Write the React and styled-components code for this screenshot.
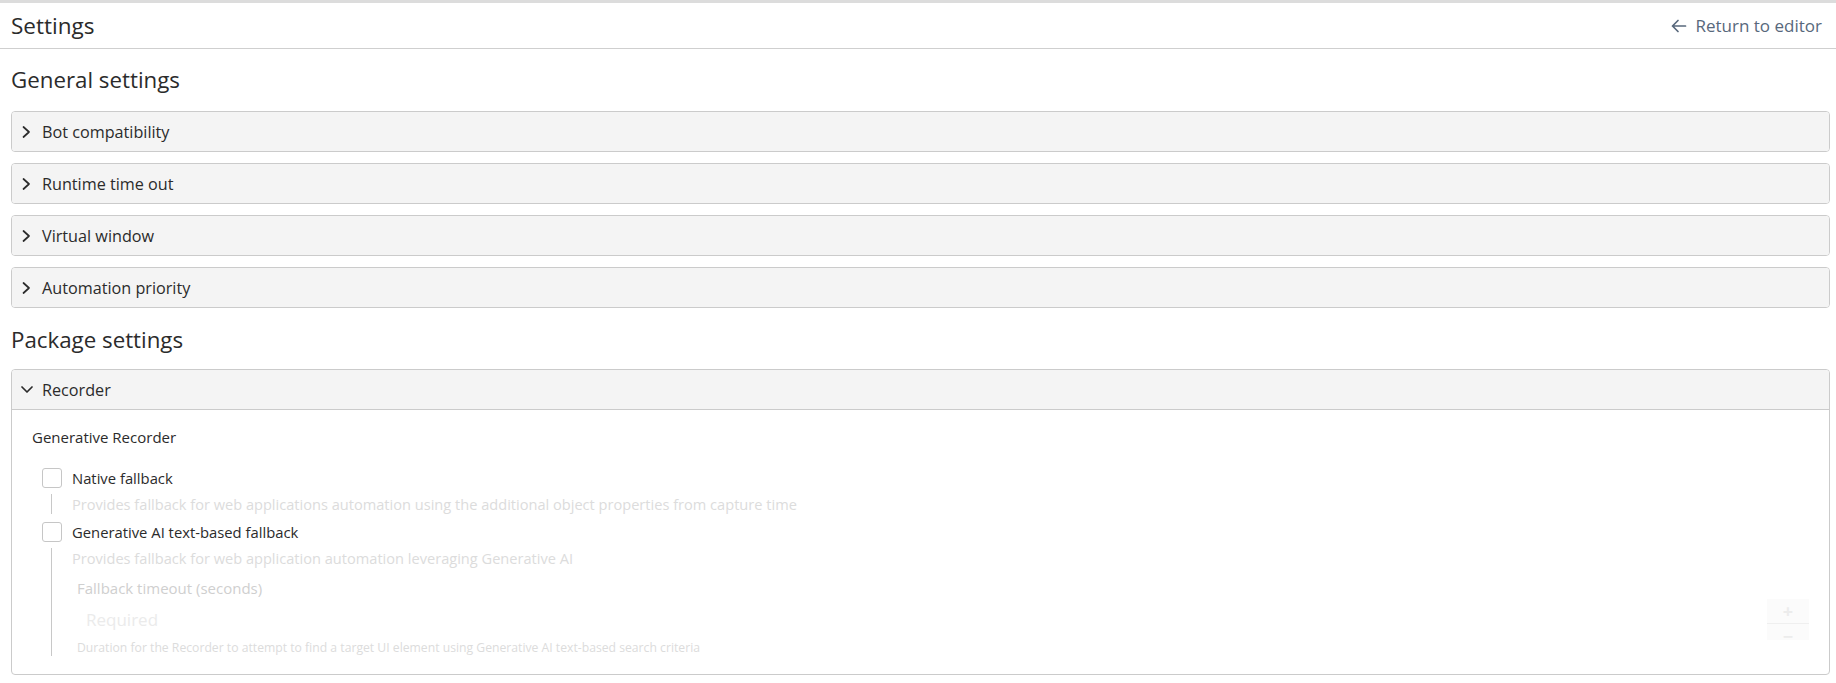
import React from 'react';
import styled, { createGlobalStyle } from 'styled-components';

const Global = createGlobalStyle`
  html, body {
    margin: 0;
    padding: 0;
    background: #fff;
    font-family: "Open Sans", Lato, sans-serif;
    color: #2b2b2b;
  }
`;

const Page = styled.div`
  border-top: 3px solid #dcdcdc;
`;

const Header = styled.header`
  height: 45px;
  display: flex;
  align-items: center;
  justify-content: space-between;
  padding: 0 14px 0 11px;
  border-bottom: 1px solid #cfcfcf;
`;

const Title = styled.h1`
  margin: 0;
  font-size: 22.5px;
  font-weight: 400;
  line-height: 30px;
  color: #2b2b2b;
`;

const BackLink = styled.a`
  display: flex;
  align-items: center;
  gap: 9px;
  font-size: 17px;
  color: #58687c;
  text-decoration: none;
  cursor: pointer;
`;

const Content = styled.main`
  padding: 0 6px 0 11px;
`;

const SectionTitle = styled.h2`
  margin: 0;
  padding: ${p => p.$top}px 0 0 0;
  height: ${p => p.$height}px;
  box-sizing: border-box;
  font-size: 22.3px;
  font-weight: 400;
  line-height: 30px;
  color: #2b2b2b;
`;

const Stack = styled.div`
  display: flex;
  flex-direction: column;
  gap: 11px;
`;

const Panel = styled.section`
  border: 1px solid #cbcbcb;
  border-radius: 4px;
  overflow: hidden;
  background: #fff;
`;

const PanelHead = styled.div`
  height: 39px;
  display: flex;
  align-items: center;
  gap: 9px;
  padding-left: 9px;
  background: #f4f4f4;
  font-size: 16.2px;
  color: #2b2b2b;
  border-bottom: ${p => (p.$open ? '1px solid #cbcbcb' : 'none')};
`;

const PanelBody = styled.div`
  padding: 17px 20px 18px 20px;
`;

const Group = styled.div`
  font-size: 15px;
  line-height: 20px;
  color: #2b2b2b;
  margin-bottom: 21px;
`;

const OptionRow = styled.label`
  display: flex;
  align-items: center;
  gap: 10px;
  padding-left: 10px;
  height: 20px;
  font-size: 14.8px;
  color: #2b2b2b;
`;

const Box = styled.span`
  width: 18px;
  height: 18px;
  border: 1px solid #c6c6c6;
  border-radius: 3px;
  background: #fff;
`;

const Detail = styled.div`
  margin: 6px 0 8px 19px;
  border-left: 1px solid #c8c8c8;
  padding-left: 20px;
  &:last-child {
    margin-bottom: 0;
  }
`;

const Hint = styled.div`
  font-size: 14.6px;
  color: #dcdcdc;
  line-height: 20px;
`;

const Field = styled.div`
  padding: 10px 0 0 5px;
`;

const FieldLabel = styled.div`
  font-size: 15px;
  color: #cfcfcf;
  line-height: 20px;
`;

const InputRow = styled.div`
  display: flex;
  align-items: center;
  justify-content: space-between;
  height: 42px;
`;

const Placeholder = styled.span`
  padding-left: 9px;
  font-size: 17px;
  color: #ebebeb;
`;

const Stepper = styled.div`
  width: 42px;
  height: 41px;
  display: flex;
  flex-direction: column;
  background: #fbfbfb;
  color: #ececec;
  font-size: 18px;
  font-weight: 700;
  & > span {
    flex: 1;
    display: flex;
    align-items: center;
    justify-content: center;
  }
  & > span + span {
    border-top: 1px solid #efefef;
  }
`;

const Help = styled.div`
  font-size: 12.2px;
  line-height: 16px;
  color: #dcdcdc;
`;

const Chevron = ({ open }) => (
  <svg width="12" height="14" viewBox="0 0 12 14" fill="none" stroke="#2b2b2b" strokeWidth="1.7" strokeLinecap="round" strokeLinejoin="round">
    {open ? <path d="M1 4 L6 9 L11 4" /> : <path d="M2.5 2 L8 7 L2.5 12" />}
  </svg>
);

const ArrowLeft = () => (
  <svg width="16" height="16" viewBox="0 0 16 16" fill="none" stroke="#58687c" strokeWidth="1.7" strokeLinecap="round" strokeLinejoin="round">
    <path d="M14.5 8 H1.5 M7 2.5 L1.5 8 L7 13.5" />
  </svg>
);

const general = ['Bot compatibility', 'Runtime time out', 'Virtual window', 'Automation priority'];

export default function App() {
  return (
    <Page>
      <Global />
      <Header>
        <Title>Settings</Title>
        <BackLink>
          <ArrowLeft />
          Return to editor
        </BackLink>
      </Header>
      <Content>
        <SectionTitle $top={16} $height={62}>General settings</SectionTitle>
        <Stack>
          {general.map(name => (
            <Panel key={name}>
              <PanelHead>
                <Chevron />
                {name}
              </PanelHead>
            </Panel>
          ))}
        </Stack>
        <SectionTitle $top={17} $height={61}>Package settings</SectionTitle>
        <Panel>
          <PanelHead $open>
            <Chevron open />
            Recorder
          </PanelHead>
          <PanelBody>
            <Group>Generative Recorder</Group>
            <OptionRow>
              <Box />
              Native fallback
            </OptionRow>
            <Detail>
              <Hint>Provides fallback for web applications automation using the additional object properties from capture time</Hint>
            </Detail>
            <OptionRow>
              <Box />
              Generative AI text-based fallback
            </OptionRow>
            <Detail>
              <Hint>Provides fallback for web application automation leveraging Generative AI</Hint>
              <Field>
                <FieldLabel>Fallback timeout (seconds)</FieldLabel>
                <InputRow>
                  <Placeholder>Required</Placeholder>
                  <Stepper>
                    <span>+</span>
                    <span>−</span>
                  </Stepper>
                </InputRow>
                <Help>Duration for the Recorder to attempt to find a target UI element using Generative AI text-based search criteria</Help>
              </Field>
            </Detail>
          </PanelBody>
        </Panel>
      </Content>
    </Page>
  );
}
